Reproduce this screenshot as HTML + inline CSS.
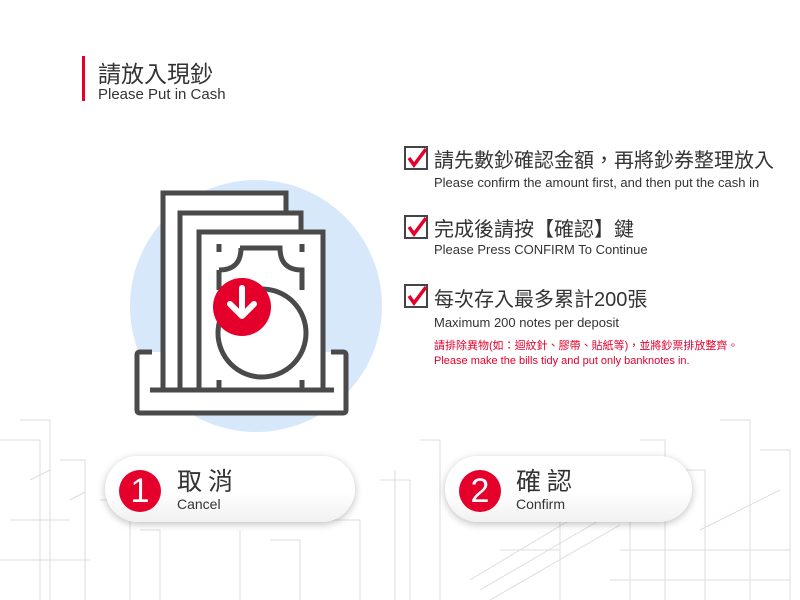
<!DOCTYPE html>
<html><head><meta charset="utf-8"><style>
body{margin:0;width:800px;height:600px;overflow:hidden;background:#fff;position:relative;font-family:"Liberation Sans","Noto Sans CJK TC",sans-serif;color:#333}
.a{position:absolute;white-space:nowrap}
.cb{position:absolute;width:20px;height:20px;border:2px solid #444;background:#fff}
.zh{font-size:20px;color:#333}
.en{font-size:13px;color:#333}
.pill{position:absolute;height:66px;border-radius:33px;background:linear-gradient(#fff 55%,#f1f1f1);box-shadow:0 2px 8px rgba(0,0,0,.25)}
.num{position:absolute;left:14px;top:14px;width:42px;height:42px;border-radius:50%;background:#e4002b;color:#fff;font-size:34px;text-align:center;line-height:42px}
</style></head><body>
<svg class="a" style="left:0;top:380px" width="800" height="220" stroke="#d4d4d4" fill="none" stroke-width="1">
<g opacity=".8">
<path d="M0 60h40v160M20 40h30v180M60 80h25v140M100 120h30v100M140 150h20v70M240 150v70M380 100h30v120M420 60h20v160M395 90v130M600 80h30v140M640 60h25v160M680 90h25v130M720 40h30v180M760 70h30v150M30 100l20-10M70 120l15-8M700 150l80-40M470 200l100-60M480 210l120-70M490 220l130-75M500 170h60v50M520 140h40M560 110v110M320 140h40v80M270 160h30v60M10 140h60M0 180h90M610 200h180M620 170h170"/>
</g></svg>
<div class="a" style="left:82px;top:56px;width:3px;height:45px;background:#e4002b"></div>
<div class="a" style="left:98px;top:55px;font-size:23px;color:#333">請放入現鈔</div>
<div class="a" style="left:98px;top:86px;font-size:15px;color:#333">Please Put in Cash</div>

<div class="a" style="left:130px;top:180px;width:252px;height:252px;border-radius:50%;background:#d7e8fa"></div>
<svg class="a" style="left:0;top:0" width="400" height="440" fill="none" stroke="#4a4a4a" stroke-width="5">
<path d="M152 352h-12q-3 0-3 3v55q0 3 3 3h203q3 0 3-3v-55q0-3-3-3h-12" fill="#fff"/>
<path d="M163 390V193h123v20" fill="#fff"/>
<path d="M180 390V213h121v19" fill="#fff"/>
<path d="M199 390V232h124v158" fill="#fff"/>
<path d="M219 244v8M302 244v8M240 248h40q0 22 22 22v20M219 270q22 0 22-22M219 270v20M219 380v8M302 380v8"/>
<circle cx="262" cy="333" r="44" fill="#fff"/>
<path d="M150 390h184"/>
<circle cx="242" cy="307" r="29" fill="#e4002b" stroke="none"/>
<path d="M242 288v27M230 304l12 12l12-12" stroke="#fff" stroke-width="6" stroke-linecap="round" stroke-linejoin="round"/>
</svg>

<div class="cb" style="left:404px;top:146px"></div>
<svg class="a" style="left:404px;top:146px" width="24" height="24"><path d="M5 12l5 7L22 3" stroke="#e4002b" stroke-width="3.5" fill="none"/></svg>
<div class="a zh" style="left:434px;top:144px">請先數鈔確認金額，再將鈔券整理放入</div>
<div class="a en" style="left:434px;top:175px">Please confirm the amount first, and then put the cash in</div>

<div class="cb" style="left:404px;top:215px"></div>
<svg class="a" style="left:404px;top:215px" width="24" height="24"><path d="M5 12l5 7L22 3" stroke="#e4002b" stroke-width="3.5" fill="none"/></svg>
<div class="a zh" style="left:434px;top:213px">完成後請按【確認】鍵</div>
<div class="a en" style="left:434px;top:242px">Please Press CONFIRM To Continue</div>

<div class="a cb" style="left:404px;top:284px"></div>
<svg class="a" style="left:404px;top:284px" width="24" height="24"><path d="M5 12l5 7L22 3" stroke="#e4002b" stroke-width="3.5" fill="none"/></svg>
<div class="a zh" style="left:434px;top:283px">每次存入最多累計200張</div>
<div class="a en" style="left:434px;top:315px">Maximum 200 notes per deposit</div>
<div class="a" style="left:434px;top:337px;font-size:11px;color:#e4002b">請排除異物(如：迴紋針、膠帶、貼紙等)，並將鈔票排放整齊。</div>
<div class="a" style="left:434px;top:355px;font-size:11px;color:#e4002b">Please make the bills tidy and  put only banknotes in.</div>

<div class="pill" style="left:105px;top:456px;width:250px"><div class="num">1</div>
<div class="a" style="left:72px;top:6px;font-size:25px;letter-spacing:6px">取消</div>
<div class="a" style="left:72px;top:40px;font-size:14px">Cancel</div></div>
<div class="pill" style="left:445px;top:456px;width:247px"><div class="num">2</div>
<div class="a" style="left:71px;top:6px;font-size:25px;letter-spacing:6px">確認</div>
<div class="a" style="left:71px;top:40px;font-size:14px">Confirm</div></div>
</body></html>
